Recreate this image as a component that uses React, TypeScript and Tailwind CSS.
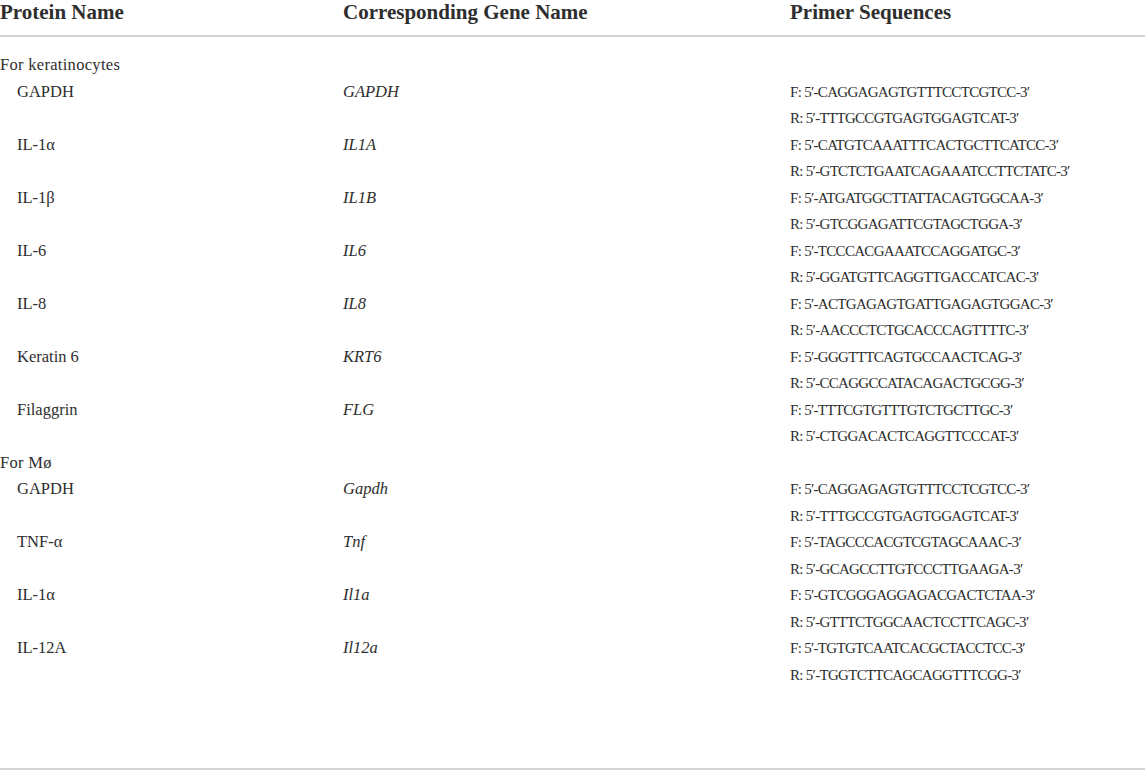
import React from "react";

type Entry = { p: string; g: string; f: string; r: string };

const groups: { title: string; items: Entry[] }[] = [
  {
    title: "For keratinocytes",
    items: [
      { p: "GAPDH", g: "GAPDH", f: "CAGGAGAGTGTTTCCTCGTCC", r: "TTTGCCGTGAGTGGAGTCAT" },
      { p: "IL-1α", g: "IL1A", f: "CATGTCAAATTTCACTGCTTCATCC", r: "GTCTCTGAATCAGAAATCCTTCTATC" },
      { p: "IL-1β", g: "IL1B", f: "ATGATGGCTTATTACAGTGGCAA", r: "GTCGGAGATTCGTAGCTGGA" },
      { p: "IL-6", g: "IL6", f: "TCCCACGAAATCCAGGATGC", r: "GGATGTTCAGGTTGACCATCAC" },
      { p: "IL-8", g: "IL8", f: "ACTGAGAGTGATTGAGAGTGGAC", r: "AACCCTCTGCACCCAGTTTTC" },
      { p: "Keratin 6", g: "KRT6", f: "GGGTTTCAGTGCCAACTCAG", r: "CCAGGCCATACAGACTGCGG" },
      { p: "Filaggrin", g: "FLG", f: "TTTCGTGTTTGTCTGCTTGC", r: "CTGGACACTCAGGTTCCCAT" },
    ],
  },
  {
    title: "For Mø",
    items: [
      { p: "GAPDH", g: "Gapdh", f: "CAGGAGAGTGTTTCCTCGTCC", r: "TTTGCCGTGAGTGGAGTCAT" },
      { p: "TNF-α", g: "Tnf", f: "TAGCCCACGTCGTAGCAAAC", r: "GCAGCCTTGTCCCTTGAAGA" },
      { p: "IL-1α", g: "Il1a", f: "GTCGGGAGGAGACGACTCTAA", r: "GTTTCTGGCAACTCCTTCAGC" },
      { p: "IL-12A", g: "Il12a", f: "TGTGTCAATCACGCTACCTCC", r: "TGGTCTTCAGCAGGTTTCGG" },
    ],
  },
];

export default function App() {
  return (
    <div
      className="w-[1145px] h-[772px] bg-white text-[#2e2e2e] overflow-hidden"
      style={{ fontFamily: '"Liberation Serif", "Times New Roman", serif' }}
    >
      <div className="grid grid-cols-[343px_447px_1fr] h-[37px] border-b-2 border-[#d4d4d4] text-[21px] font-bold leading-[24px]">
        <div>Protein Name</div>
        <div>Corresponding Gene Name</div>
        <div>Primer Sequences</div>
      </div>
      <div className="pt-[15px] pb-[80px] border-b-2 border-[#d4d4d4] text-[16.5px] leading-[26.5px]">
        {groups.map((grp) => (
          <div key={grp.title}>
            <div className="h-[26.5px] tracking-[0.3px]">{grp.title}</div>
            {grp.items.map((e, i) => (
              <div key={i} className="grid grid-cols-[343px_447px_1fr]">
                <div className="pl-[17px]">{e.p}</div>
                <div className="italic">{e.g}</div>
                <div className="text-[15px] tracking-[-0.7px]">
                  <div className="h-[26.5px]">F: 5′-{e.f}-3′</div>
                  <div className="h-[26.5px]">R: 5′-{e.r}-3′</div>
                </div>
              </div>
            ))}
          </div>
        ))}
      </div>
    </div>
  );
}
